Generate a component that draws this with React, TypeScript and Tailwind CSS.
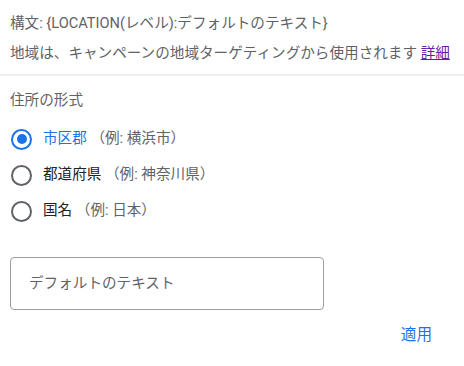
import { useState } from "react";

const options = [
    { id: "city", label: "市区郡", example: "（例: 横浜市）" },
    { id: "pref", label: "都道府県", example: "（例: 神奈川県）" },
    { id: "country", label: "国名", example: "（例: 日本）" },
];

function Radio({ checked }: { checked: boolean }) {
    return (
        <span
            className={
                "flex h-[21px] w-[21px] shrink-0 items-center justify-center rounded-full border-[2.5px] " +
                (checked ? "border-[#1a73e8]" : "border-[#5f6368]")
            }
        >
            {checked && <span className="h-[10px] w-[10px] rounded-full bg-[#1a73e8]" />}
        </span>
    );
}

export default function App() {
    const [selected, setSelected] = useState("city");

    return (
        <div
            className="w-[464px] h-[366px] bg-white text-[14.6px] text-[#5f6368]"
            style={{ fontFamily: "Roboto, 'Noto Sans CJK JP', sans-serif" }}
        >
            <div className="px-[10px] pt-[8px]">
                <div className="leading-[30px] whitespace-nowrap">構文: {"{"}LOCATION(レベル):デフォルトのテキスト{"}"}</div>
                <div className="leading-[30px] whitespace-nowrap">
                    地域は、キャンペーンの地域ターゲティングから使用されます{" "}
                    <a href="#" className="text-[#681da8] underline">詳細</a>
                </div>
            </div>
            <div className="mt-[6px] h-[2px] bg-[#eceef0]" />

            <div className="px-[10px]">
                <div className="mt-[12px] leading-[24px]">住所の形式</div>
                <div className="mt-[9px] flex flex-col">
                    {options.map((o) => (
                        <label
                            key={o.id}
                            className="flex h-[36px] cursor-pointer items-center gap-[11px] pl-[1px]"
                            onClick={() => setSelected(o.id)}
                        >
                            <Radio checked={selected === o.id} />
                            <span className="whitespace-nowrap">
                                <span className={selected === o.id ? "text-[#1a73e8]" : "text-[#202124]"}>{o.label}</span>{" "}
                                <span>{o.example}</span>
                            </span>
                        </label>
                    ))}
                </div>

                <div className="mt-[28px] flex h-[53px] w-[314px] items-center rounded-[4px] border border-[#9aa0a6] px-[18px]">
                    <input
                        className="w-full bg-transparent text-[14.6px] text-[#202124] outline-none placeholder:text-[#5f6368]"
                        placeholder="デフォルトのテキスト"
                    />
                </div>

                <div className="mt-[8px] flex justify-end pr-[22px]">
                    <button className="h-[36px] text-[15.6px] text-[#1a73e8]">適用</button>
                </div>
            </div>
        </div>
    );
}
